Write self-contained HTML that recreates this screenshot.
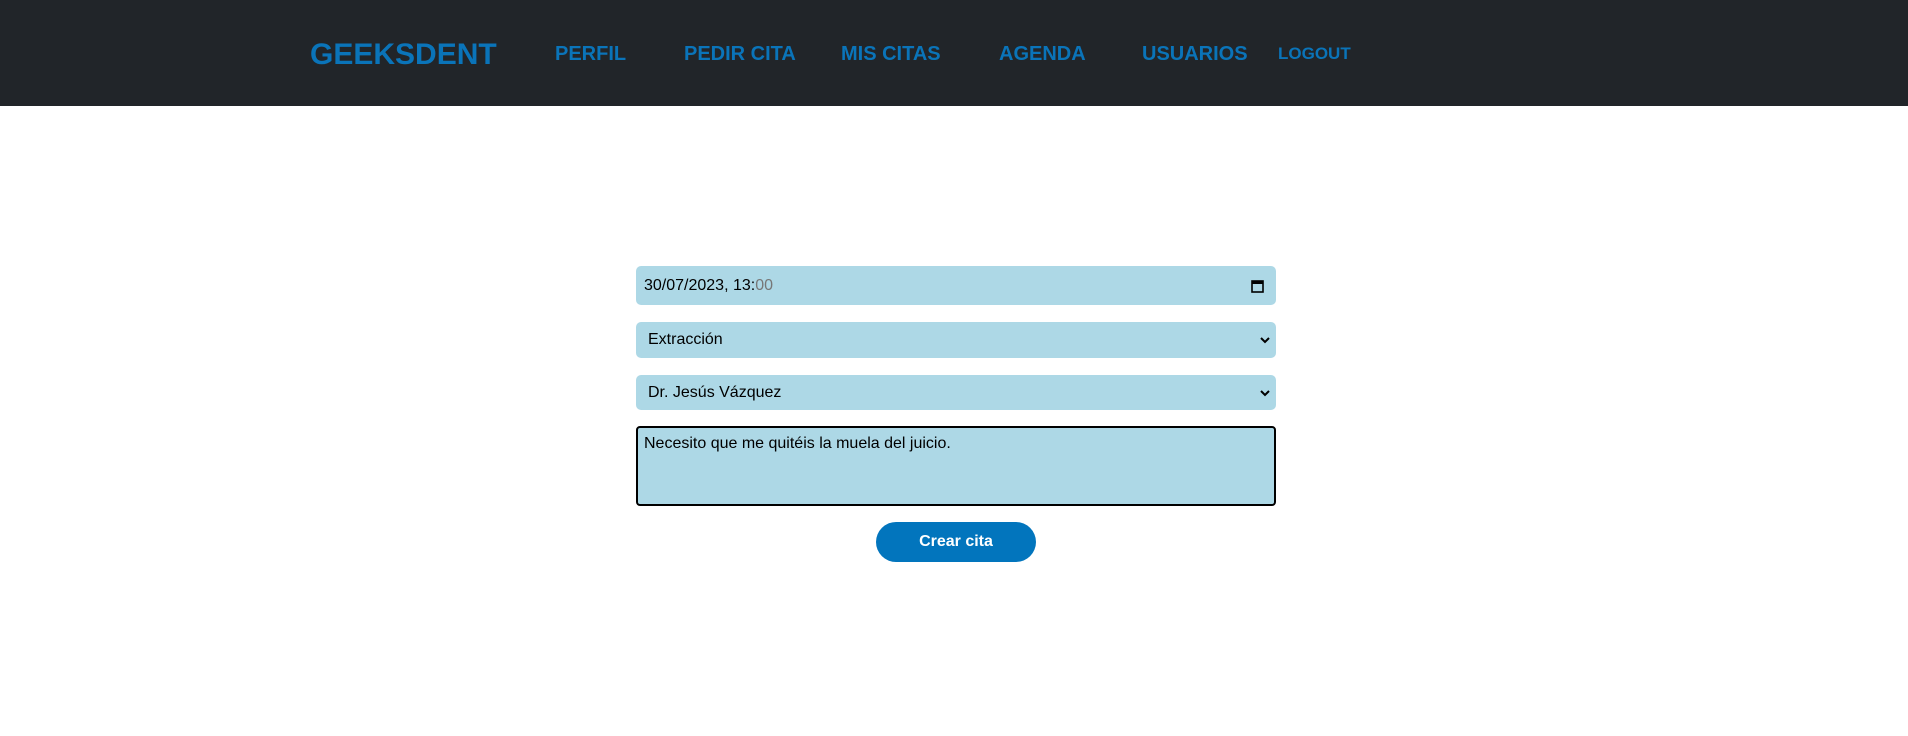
<!DOCTYPE html>
<html><head><meta charset="utf-8"><style>
body{margin:0;width:1908px;height:736px;background:#fff;font-family:"Liberation Sans",sans-serif;position:relative;overflow:hidden}
.hd{position:absolute;left:0;top:0;width:1908px;height:106px;background:#212529}
.hd span{position:absolute;color:#0a74b9;font-weight:bold;white-space:nowrap;line-height:1}
.f{position:absolute;left:636px;width:640px;background:#add8e6;border-radius:5px;box-sizing:border-box;font-size:16px;color:#000}
.f .t{position:absolute;left:9px;top:50%;transform:translateY(-50%)}
.chev{position:absolute;right:6px;top:50%;transform:translateY(-50%)}
</style></head><body>
<div class="hd">
<span style="left:310px;top:40px;font-size:30px">GEEKSDENT</span>
<span style="left:555px;top:44px;font-size:20px">PERFIL</span>
<span style="left:684px;top:44px;font-size:20px">PEDIR CITA</span>
<span style="left:841px;top:44px;font-size:20px">MIS CITAS</span>
<span style="left:999px;top:44px;font-size:20px">AGENDA</span>
<span style="left:1142px;top:44px;font-size:20px">USUARIOS</span>
<span style="left:1278px;top:45px;font-size:17px">LOGOUT</span>
</div>
<div class="f" style="top:266px;height:39px"><span class="t" style="left:8px">30/07/2023, 13:<span style="color:#777">00</span></span>
<svg class="chev" style="right:12px" width="13" height="14" viewBox="0 0 13 14"><rect x="1" y="2" width="11" height="11" fill="none" stroke="#000" stroke-width="1.6"/><rect x="1" y="2" width="11" height="3" fill="#000"/></svg></div>
<div class="f" style="top:322px;height:36px"><span class="t" style="left:12px">Extracción</span>
<svg class="chev" width="10" height="8" viewBox="0 0 10 8"><path d="M1 2l4 4 4-4" fill="none" stroke="#000" stroke-width="2"/></svg></div>
<div class="f" style="top:375px;height:35px"><span class="t" style="left:12px">Dr. Jesús Vázquez</span>
<svg class="chev" width="10" height="8" viewBox="0 0 10 8"><path d="M1 2l4 4 4-4" fill="none" stroke="#000" stroke-width="2"/></svg></div>
<div class="f" style="top:426px;height:80px;border:2px solid #000;border-radius:4px"><span style="position:absolute;left:6px;top:7px">Necesito que me quitéis la muela del juicio.</span></div>
<div style="position:absolute;left:876px;top:522px;width:160px;height:40px;border-radius:20px;background:#0275bd;color:#fff;font-weight:bold;font-size:16px;text-align:center;line-height:40px">Crear cita</div>
</body></html>
